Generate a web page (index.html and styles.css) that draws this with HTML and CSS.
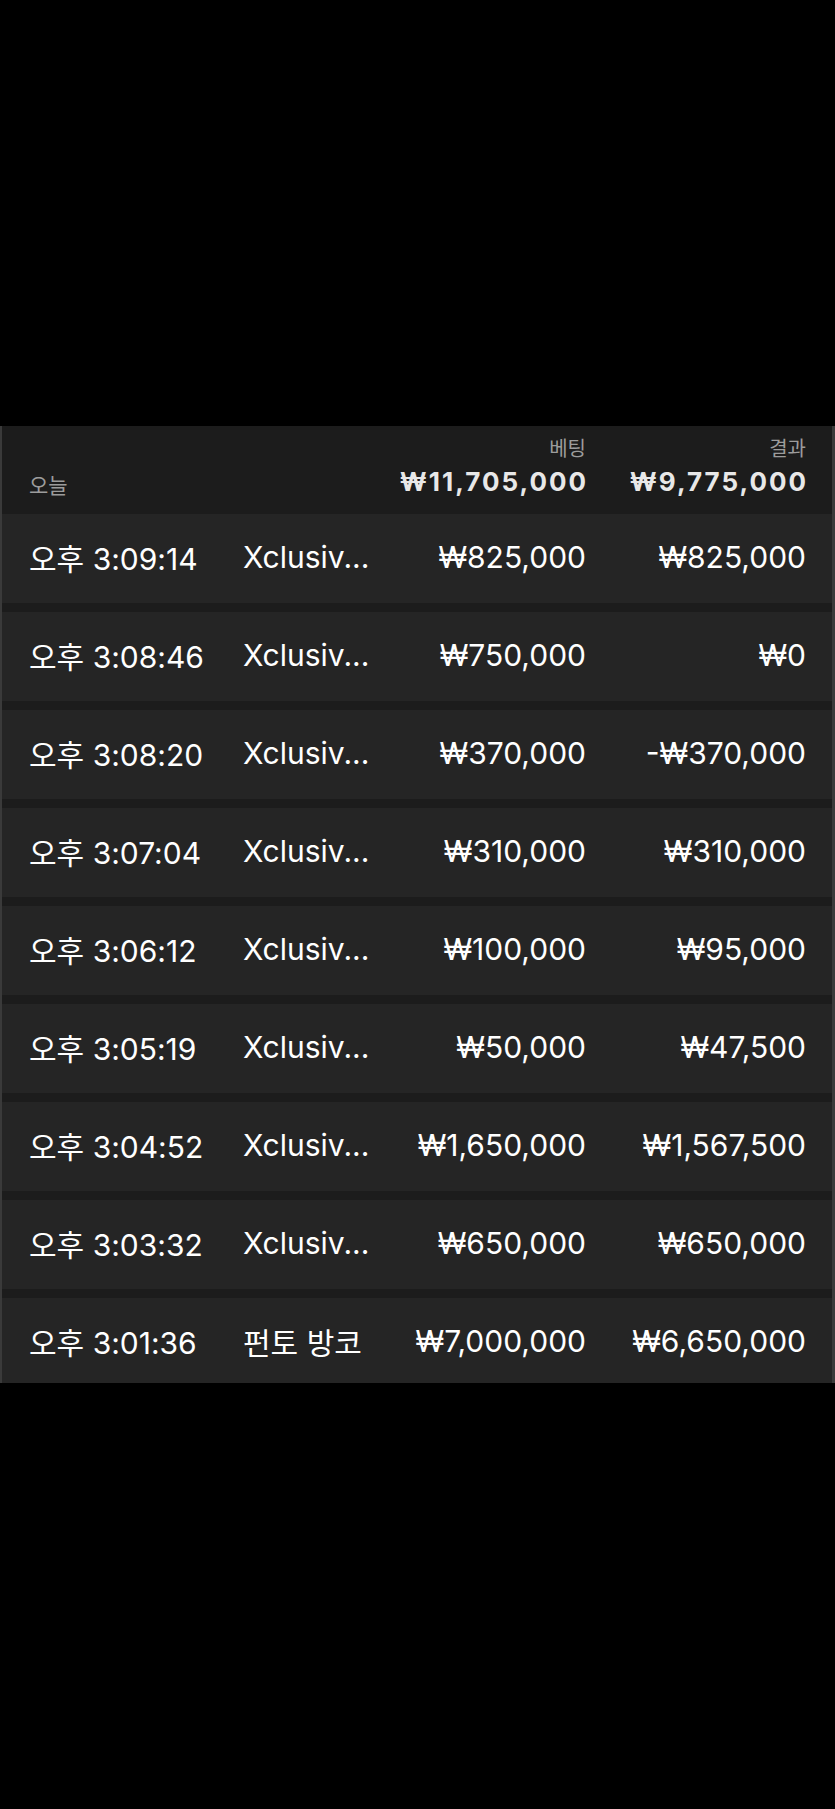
FILE: index.html
```html
<!DOCTYPE html>
<html lang="ko">
<head>
  <meta charset="UTF-8">
  <title>베팅 내역</title>
  <link rel="stylesheet" href="styles.css">
</head>
<body>

<div class="top-space"></div>

<div class="history">
  <div class="summary">
    <div class="day">오늘</div>
    <div></div>
    <div class="total">
      <span class="label">베팅</span>
      <span class="sum">₩11,705,000</span>
    </div>
    <div class="total">
      <span class="label">결과</span>
      <span class="sum">₩9,775,000</span>
    </div>
  </div>

  <div class="rows">
    <div class="row"><span class="time">오후 3:09:14</span><span class="game">Xclusiv...</span><span class="amt">₩825,000</span><span class="amt">₩825,000</span></div>
    <div class="row"><span class="time">오후 3:08:46</span><span class="game">Xclusiv...</span><span class="amt">₩750,000</span><span class="amt">₩0</span></div>
    <div class="row"><span class="time">오후 3:08:20</span><span class="game">Xclusiv...</span><span class="amt">₩370,000</span><span class="amt">-₩370,000</span></div>
    <div class="row"><span class="time">오후 3:07:04</span><span class="game">Xclusiv...</span><span class="amt">₩310,000</span><span class="amt">₩310,000</span></div>
    <div class="row"><span class="time">오후 3:06:12</span><span class="game">Xclusiv...</span><span class="amt">₩100,000</span><span class="amt">₩95,000</span></div>
    <div class="row"><span class="time">오후 3:05:19</span><span class="game">Xclusiv...</span><span class="amt">₩50,000</span><span class="amt">₩47,500</span></div>
    <div class="row"><span class="time">오후 3:04:52</span><span class="game">Xclusiv...</span><span class="amt">₩1,650,000</span><span class="amt">₩1,567,500</span></div>
    <div class="row"><span class="time">오후 3:03:32</span><span class="game">Xclusiv...</span><span class="amt">₩650,000</span><span class="amt">₩650,000</span></div>
    <div class="row"><span class="time">오후 3:01:36</span><span class="game">펀토 방코</span><span class="amt">₩7,000,000</span><span class="amt">₩6,650,000</span></div>
  </div>
</div>

</body>
</html>
```

FILE: styles.css
```css
body {
  margin: 0;
  background: #000;
  font-family: Inter, "Noto Sans CJK KR", sans-serif;
  color: #fff;
}
.top-space {
  height: 426px;
}
.history {
  height: 957px;
  overflow: hidden;
  background: #1c1c1c;
  border-left: 2px solid #3a3a3a;
  border-right: 3px solid #3a3a3a;
}
.summary, .row {
  display: grid;
  grid-template-columns: 214px 130px 1fr 220px;
  padding: 0 26px 0 27px;
}
.summary {
  height: 88px;
  align-items: end;
  padding-bottom: 17px;
  box-sizing: border-box;
}
.day {
  font-size: 21px;
  color: #9c9c9c;
  line-height: 24px;
  margin-bottom: -1px;
}
.total {
  display: flex;
  flex-direction: column;
  align-items: flex-end;
}
.total .label {
  font-size: 20px;
  color: #9c9c9c;
  line-height: 24px;
  margin-bottom: 6px;
}
.total .sum {
  font-size: 26px;
  font-weight: 700;
  letter-spacing: 2px;
  margin-right: -2px;
  color: #e8e8e8;
  line-height: 30px;
}
.rows {
  display: flex;
  flex-direction: column;
  gap: 9px;
}
.row {
  height: 89px;
  box-sizing: border-box;
  padding-bottom: 4px;
  align-items: center;
  background: #252525;
  font-size: 30px;
}
.game {
  white-space: nowrap;
}
.amt {
  text-align: right;
}
```
